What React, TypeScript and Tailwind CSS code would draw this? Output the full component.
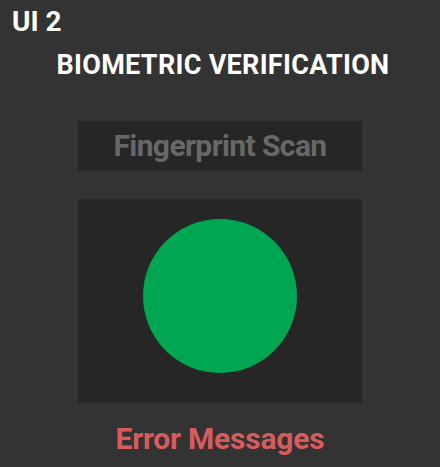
export default function App() {
  return (
    <div
      className="w-[440px] h-[467px] bg-[#333333] overflow-hidden font-bold text-white"
      style={{ fontFamily: "Roboto, 'Liberation Sans', sans-serif" }}
    >
      <div className="pt-2 pl-3 text-[28px] leading-none">UI 2</div>
      <h1 className="mt-[16px] text-center text-[27px] leading-none tracking-[0.3px] pl-[6px]">
        BIOMETRIC VERIFICATION
      </h1>
      <div className="mt-[42px] mx-auto w-[284px] h-[50px] bg-[#262626] flex items-center justify-center">
        <span className="text-[30px] leading-none tracking-[-0.6px] text-[#686868]">
          Fingerprint Scan
        </span>
      </div>
      <div className="mt-[28px] mx-auto w-[284px] h-[204px] bg-[#262626] flex justify-center pt-[20px]">
        <div className="w-[154px] h-[154px] rounded-full bg-[#00a651]" />
      </div>
      <p className="mt-[21px] text-center text-[30px] leading-none tracking-[-0.2px] text-[#d85c5c]">
        Error Messages
      </p>
    </div>
  );
}
